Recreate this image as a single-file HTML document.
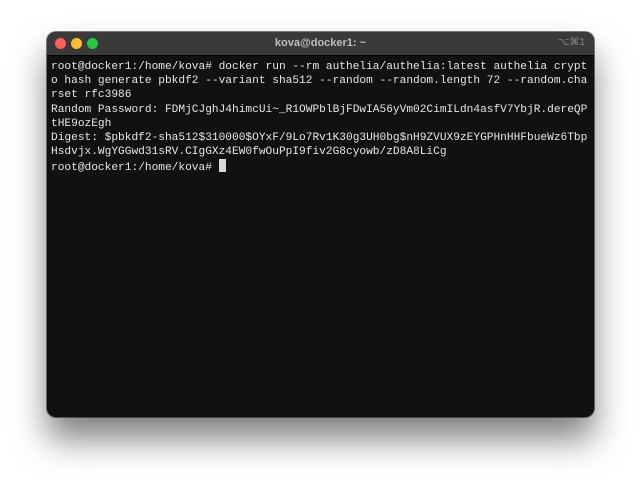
<!DOCTYPE html>
<html><head><meta charset="utf-8"><style>
html,body{margin:0;padding:0;width:640px;height:479px;background:#fff;overflow:hidden}
.win{position:absolute;left:47px;top:32px;width:547px;height:385px;border-radius:9px;background:#111;box-shadow:0 22px 34px rgba(0,0,0,0.5),0 0 0 1px rgba(0,0,0,0.5);overflow:hidden}
.bar{height:23px;background:#3a3a3a;border-bottom:1px solid #000;position:relative}
.dot{position:absolute;top:6px;width:11px;height:11px;border-radius:50%}
.title{position:absolute;left:0;right:0;top:5px;text-align:center;font:bold 11px "Liberation Sans",sans-serif;color:#bdbdbd}
.sc{position:absolute;right:9px;top:5px;font:10px "Liberation Sans","DejaVu Sans",sans-serif;color:#888}
pre{margin:0;position:absolute;left:4px;top:28px;font:11.18px/14.2px "Liberation Mono",monospace;color:#e6e6e6}
.cur{display:inline-block;width:7px;height:13px;background:#d8d8d8;vertical-align:-2px}
</style></head><body>
<div class="win">
<div class="bar">
<div class="dot" style="left:8px;background:#fe5f57"></div>
<div class="dot" style="left:24px;background:#febc2e"></div>
<div class="dot" style="left:40px;background:#28c840"></div>
<div class="title">kova@docker1: ~</div>
<div class="sc">⌥⌘1</div>
</div>
<pre>root@docker1:/home/kova# docker run --rm authelia/authelia:latest authelia crypt
o hash generate pbkdf2 --variant sha512 --random --random.length 72 --random.cha
rset rfc3986
Random Password: FDMjCJghJ4himcUi~_R1OWPblBjFDwIA56yVm02CimILdn4asfV7YbjR.dereQP
tHE9ozEgh
Digest: $pbkdf2-sha512$310000$OYxF/9Lo7Rv1K30g3UH0bg$nH9ZVUX9zEYGPHnHHFbueWz6Tbp
Hsdvjx.WgYGGwd31sRV.CIgGXz4EW0fwOuPpI9fiv2G8cyowb/zD8A8LiCg
root@docker1:/home/kova# <span class="cur"></span></pre>
</div>
</body></html>
